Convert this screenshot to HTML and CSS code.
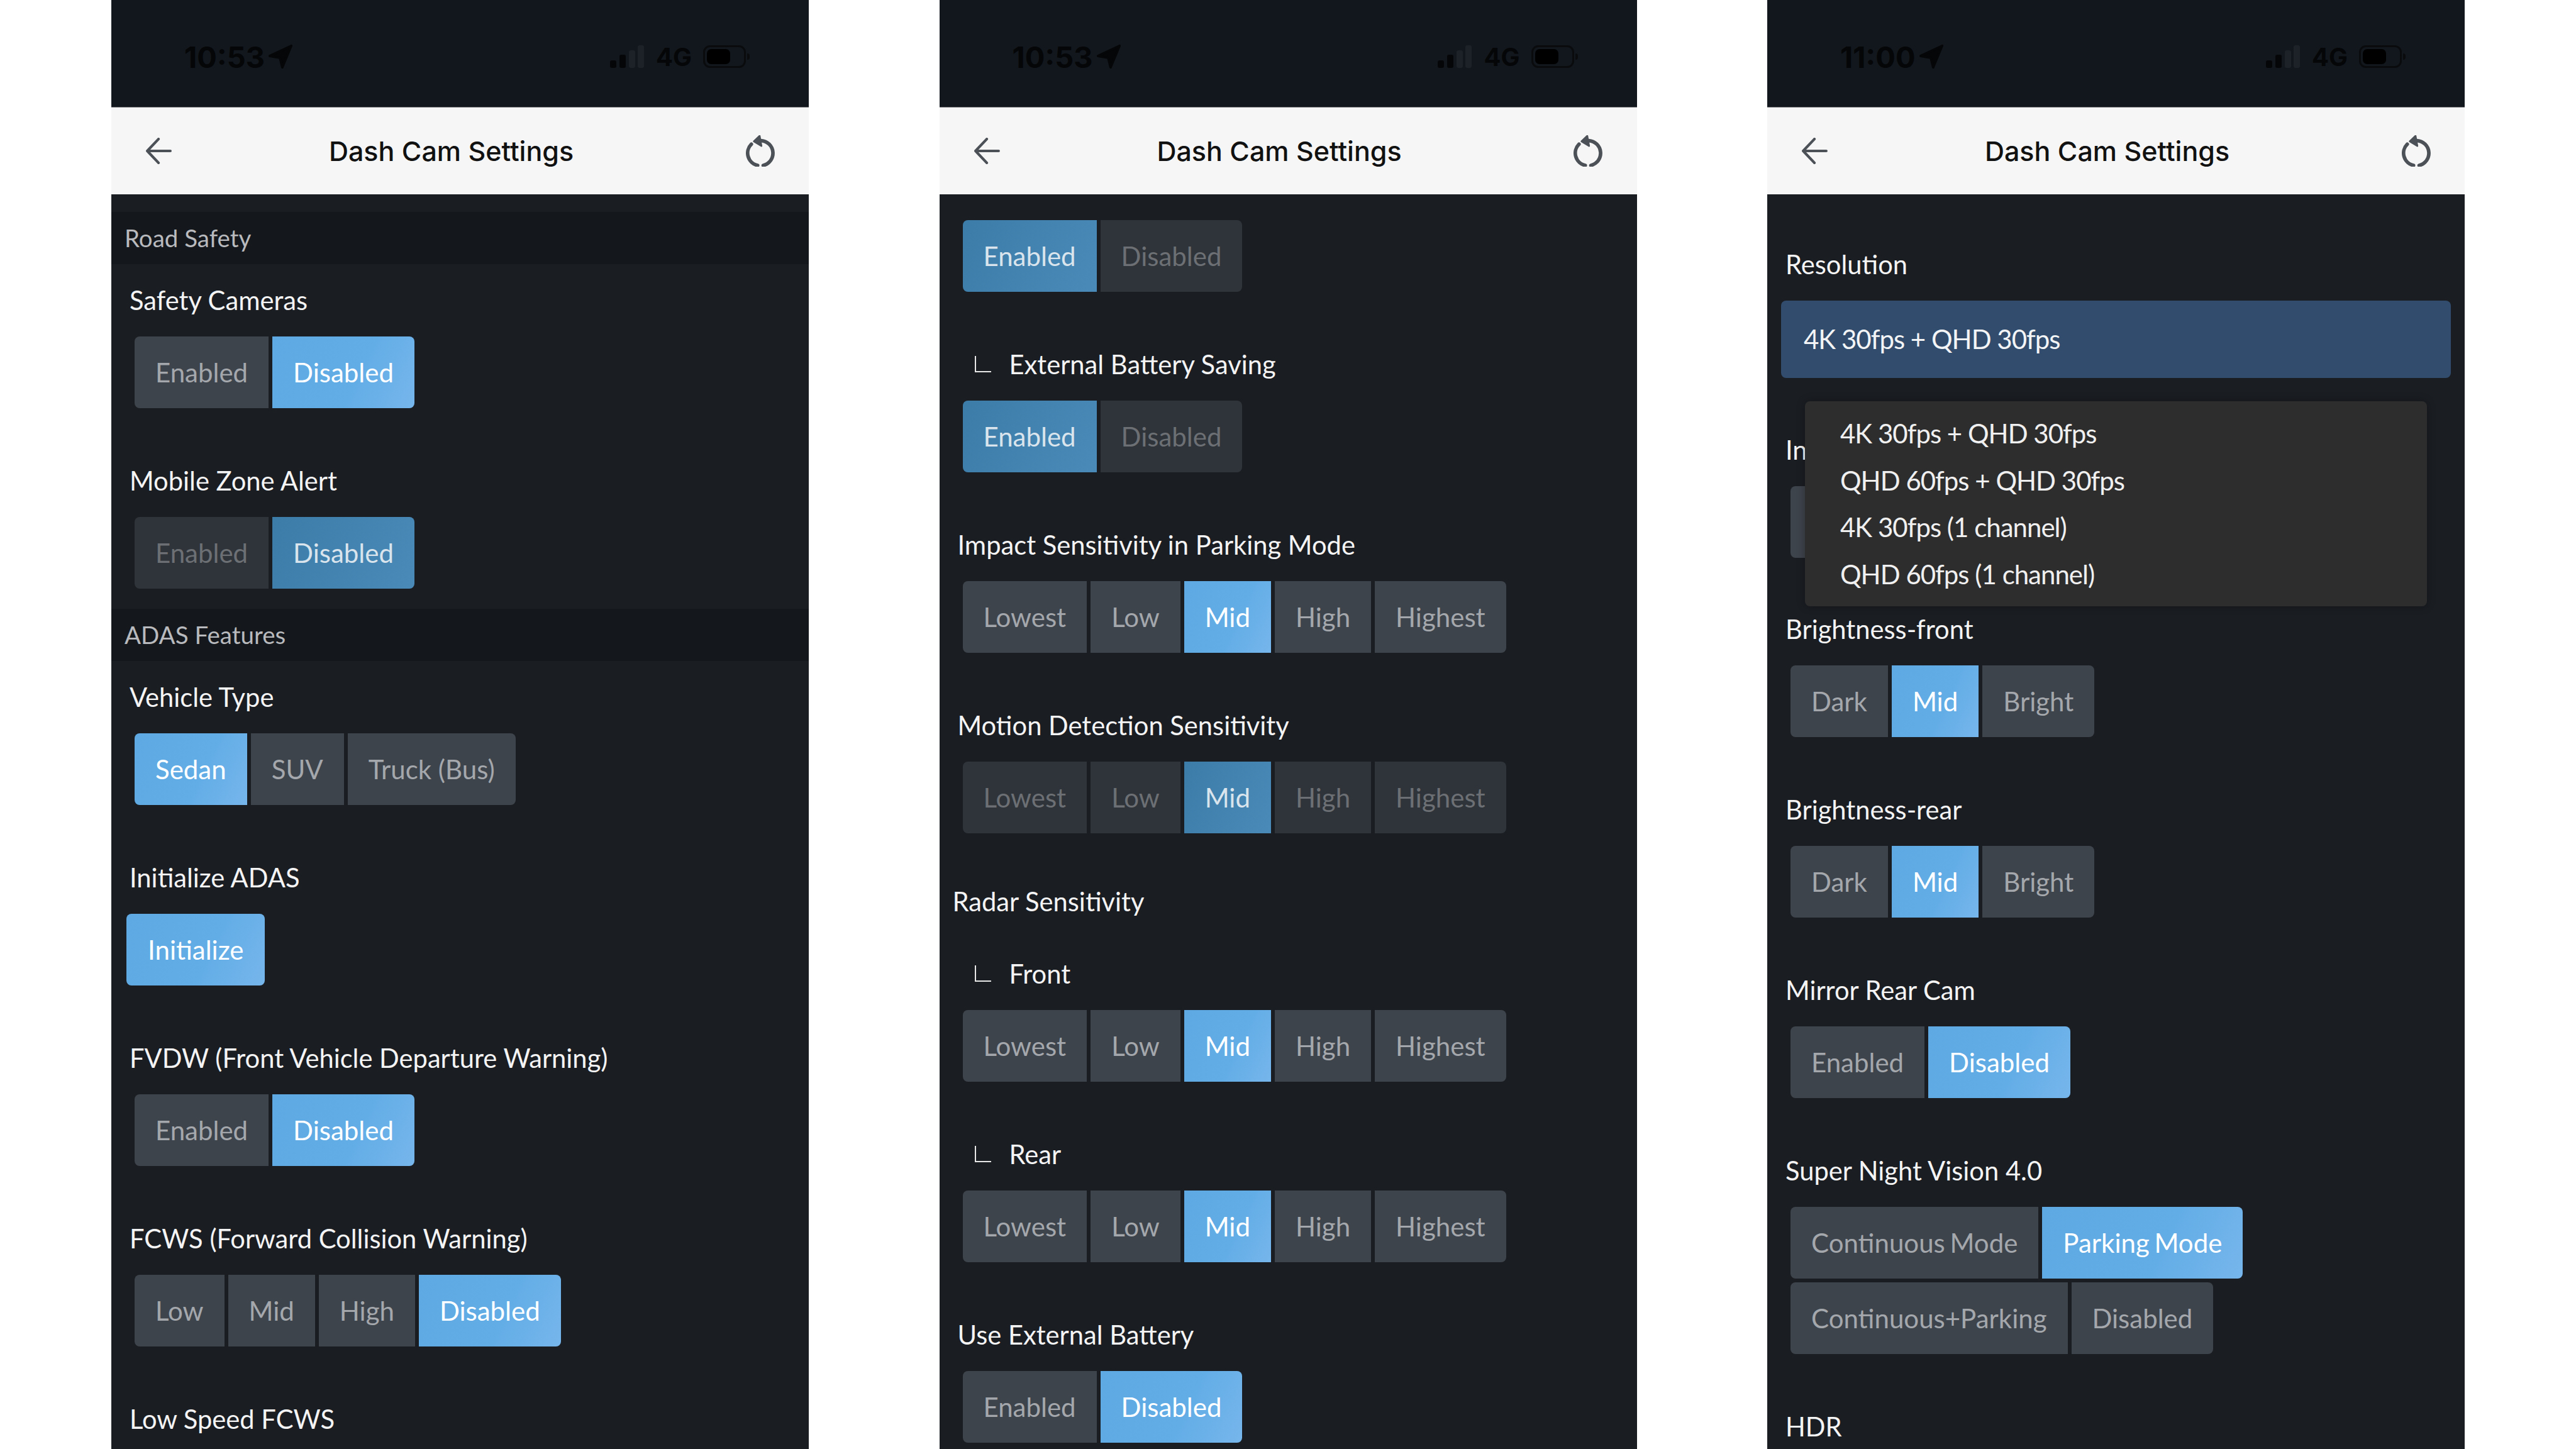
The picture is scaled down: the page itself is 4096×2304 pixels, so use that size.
FILE: index.html
```html
<!DOCTYPE html>
<html lang="en">
<head>
    <meta charset="UTF-8">
    <title>Dash Cam Settings</title>
    <link rel="stylesheet" href="styles.css">
</head>
<body>
    <!-- Road safety / ADAS screen -->
    <div class="phone">
        <div class="status">
            <div class="status-left">
                <span class="time">10:53</span>
                <svg class="loc" viewBox="0 0 42 42"><path d="M3 20 L39 3 L24 39 L20 23 Z" fill="#050607" stroke="#050607" stroke-width="4" stroke-linejoin="round"/></svg>
            </div>
            <div class="status-right">
                <svg class="signal" viewBox="0 0 54 36"><rect x="0" y="24" width="10" height="12" rx="3" fill="#050607"/><rect x="15" y="15" width="10" height="21" rx="3" fill="#050607"/><rect x="30" y="8" width="10" height="28" rx="3" fill="#1c2228"/><rect x="44" y="0" width="10" height="36" rx="3" fill="#1c2228"/></svg>
                <span class="net">4G</span>
                <div class="battery"><div class="battery-fill"></div></div>
            </div>
        </div>
        <div class="nav">
            <svg class="back" viewBox="0 0 40 40"><path d="M38 20 H3 M20 2 L3 20 L20 38" fill="none" stroke="#4c5158" stroke-width="4" stroke-linecap="round" stroke-linejoin="round"/></svg>
            <div class="title">Dash Cam Settings</div>
            <svg class="refresh" viewBox="0 0 160 175"><path d="M85 30 A70 70 0 0 1 96 168 M30 50 A70 70 0 0 0 65 168" fill="none" stroke="#4c5158" stroke-width="20" stroke-linecap="round"/><path d="M44 34 L76 4 L86 60 Z" fill="#4c5158" stroke="#4c5158" stroke-width="10" stroke-linejoin="round"/></svg>
        </div>
        <div class="content gap-top">
            <div class="band">Road Safety</div>
            <div class="section">
                <div class="item">
                    <div class="label">Safety Cameras</div>
                    <div class="btn-group">
                        <div class="btn">Enabled</div>
                        <div class="btn on">Disabled</div>
                    </div>
                </div>
                <div class="item">
                    <div class="label">Mobile Zone Alert</div>
                    <div class="btn-group">
                        <div class="btn dim">Enabled</div>
                        <div class="btn on dim">Disabled</div>
                    </div>
                </div>
            </div>
            <div class="band">ADAS Features</div>
            <div class="section">
                <div class="item">
                    <div class="label">Vehicle Type</div>
                    <div class="btn-group">
                        <div class="btn on">Sedan</div>
                        <div class="btn">SUV</div>
                        <div class="btn">Truck (Bus)</div>
                    </div>
                </div>
                <div class="item">
                    <div class="label">Initialize ADAS</div>
                    <div class="btn-group single">
                        <div class="btn on">Initialize</div>
                    </div>
                </div>
                <div class="item">
                    <div class="label">FVDW (Front Vehicle Departure Warning)</div>
                    <div class="btn-group">
                        <div class="btn">Enabled</div>
                        <div class="btn on">Disabled</div>
                    </div>
                </div>
                <div class="item">
                    <div class="label">FCWS (Forward Collision Warning)</div>
                    <div class="btn-group">
                        <div class="btn">Low</div>
                        <div class="btn">Mid</div>
                        <div class="btn">High</div>
                        <div class="btn on">Disabled</div>
                    </div>
                </div>
                <div class="item">
                    <div class="label">Low Speed FCWS</div>
                </div>
            </div>
        </div>
    </div>

    <!-- Sensitivity screen -->
    <div class="phone">
        <div class="status">
            <div class="status-left">
                <span class="time">10:53</span>
                <svg class="loc" viewBox="0 0 42 42"><path d="M3 20 L39 3 L24 39 L20 23 Z" fill="#050607" stroke="#050607" stroke-width="4" stroke-linejoin="round"/></svg>
            </div>
            <div class="status-right">
                <svg class="signal" viewBox="0 0 54 36"><rect x="0" y="24" width="10" height="12" rx="3" fill="#050607"/><rect x="15" y="15" width="10" height="21" rx="3" fill="#050607"/><rect x="30" y="8" width="10" height="28" rx="3" fill="#1c2228"/><rect x="44" y="0" width="10" height="36" rx="3" fill="#1c2228"/></svg>
                <span class="net">4G</span>
                <div class="battery"><div class="battery-fill"></div></div>
            </div>
        </div>
        <div class="nav">
            <svg class="back" viewBox="0 0 40 40"><path d="M38 20 H3 M20 2 L3 20 L20 38" fill="none" stroke="#4c5158" stroke-width="4" stroke-linecap="round" stroke-linejoin="round"/></svg>
            <div class="title">Dash Cam Settings</div>
            <svg class="refresh" viewBox="0 0 160 175"><path d="M85 30 A70 70 0 0 1 96 168 M30 50 A70 70 0 0 0 65 168" fill="none" stroke="#4c5158" stroke-width="20" stroke-linecap="round"/><path d="M44 34 L76 4 L86 60 Z" fill="#4c5158" stroke="#4c5158" stroke-width="10" stroke-linejoin="round"/></svg>
        </div>
        <div class="content start-buttons">
            <div class="item">
                <div class="btn-group">
                    <div class="btn on dim">Enabled</div>
                    <div class="btn dim">Disabled</div>
                </div>
            </div>
            <div class="item">
                <div class="label sub"><span class="corner"></span>External Battery Saving</div>
                <div class="btn-group">
                    <div class="btn on dim">Enabled</div>
                    <div class="btn dim">Disabled</div>
                </div>
            </div>
            <div class="item">
                <div class="label">Impact Sensitivity in Parking Mode</div>
                <div class="btn-group">
                    <div class="btn">Lowest</div>
                    <div class="btn">Low</div>
                    <div class="btn on">Mid</div>
                    <div class="btn">High</div>
                    <div class="btn">Highest</div>
                </div>
            </div>
            <div class="item tight">
                <div class="label">Motion Detection Sensitivity</div>
                <div class="btn-group">
                    <div class="btn dim">Lowest</div>
                    <div class="btn dim">Low</div>
                    <div class="btn on dim">Mid</div>
                    <div class="btn dim">High</div>
                    <div class="btn dim">Highest</div>
                </div>
            </div>
            <div class="label heading">Radar Sensitivity</div>
            <div class="item">
                <div class="label sub"><span class="corner"></span>Front</div>
                <div class="btn-group">
                    <div class="btn">Lowest</div>
                    <div class="btn">Low</div>
                    <div class="btn on">Mid</div>
                    <div class="btn">High</div>
                    <div class="btn">Highest</div>
                </div>
            </div>
            <div class="item">
                <div class="label sub"><span class="corner"></span>Rear</div>
                <div class="btn-group">
                    <div class="btn">Lowest</div>
                    <div class="btn">Low</div>
                    <div class="btn on">Mid</div>
                    <div class="btn">High</div>
                    <div class="btn">Highest</div>
                </div>
            </div>
            <div class="item">
                <div class="label">Use External Battery</div>
                <div class="btn-group">
                    <div class="btn">Enabled</div>
                    <div class="btn on">Disabled</div>
                </div>
            </div>
        </div>
    </div>

    <!-- Resolution screen with dropdown open -->
    <div class="phone">
        <div class="status">
            <div class="status-left">
                <span class="time">11:00</span>
                <svg class="loc" viewBox="0 0 42 42"><path d="M3 20 L39 3 L24 39 L20 23 Z" fill="#050607" stroke="#050607" stroke-width="4" stroke-linejoin="round"/></svg>
            </div>
            <div class="status-right">
                <svg class="signal" viewBox="0 0 54 36"><rect x="0" y="24" width="10" height="12" rx="3" fill="#050607"/><rect x="15" y="15" width="10" height="21" rx="3" fill="#050607"/><rect x="30" y="8" width="10" height="28" rx="3" fill="#1c2228"/><rect x="44" y="0" width="10" height="36" rx="3" fill="#1c2228"/></svg>
                <span class="net">4G</span>
                <div class="battery"><div class="battery-fill"></div></div>
            </div>
        </div>
        <div class="nav">
            <svg class="back" viewBox="0 0 40 40"><path d="M38 20 H3 M20 2 L3 20 L20 38" fill="none" stroke="#4c5158" stroke-width="4" stroke-linecap="round" stroke-linejoin="round"/></svg>
            <div class="title">Dash Cam Settings</div>
            <svg class="refresh" viewBox="0 0 160 175"><path d="M85 30 A70 70 0 0 1 96 168 M30 50 A70 70 0 0 0 65 168" fill="none" stroke="#4c5158" stroke-width="20" stroke-linecap="round"/><path d="M44 34 L76 4 L86 60 Z" fill="#4c5158" stroke="#4c5158" stroke-width="10" stroke-linejoin="round"/></svg>
        </div>
        <div class="content start-resolution">
            <div class="item select-item">
                <div class="label">Resolution</div>
                <div class="select">4K 30fps + QHD 30fps</div>
                <div class="menu">
                    <div class="menu-item">4K 30fps + QHD 30fps</div>
                    <div class="menu-item">QHD 60fps + QHD 30fps</div>
                    <div class="menu-item">4K 30fps (1 channel)</div>
                    <div class="menu-item">QHD 60fps (1 channel)</div>
                </div>
            </div>
            <div class="item under-menu">
                <div class="label">In</div>
                <div class="btn-group">
                    <div class="btn blank"></div>
                </div>
            </div>
            <div class="item">
                <div class="label">Brightness-front</div>
                <div class="btn-group">
                    <div class="btn">Dark</div>
                    <div class="btn on">Mid</div>
                    <div class="btn">Bright</div>
                </div>
            </div>
            <div class="item">
                <div class="label">Brightness-rear</div>
                <div class="btn-group">
                    <div class="btn">Dark</div>
                    <div class="btn on">Mid</div>
                    <div class="btn">Bright</div>
                </div>
            </div>
            <div class="item">
                <div class="label">Mirror Rear Cam</div>
                <div class="btn-group">
                    <div class="btn">Enabled</div>
                    <div class="btn on">Disabled</div>
                </div>
            </div>
            <div class="item">
                <div class="label">Super Night Vision 4.0</div>
                <div class="btn-group night">
                    <div class="btn">Continuous Mode</div>
                    <div class="btn on">Parking Mode</div>
                </div>
                <div class="btn-group second-row">
                    <div class="btn">Continuous+Parking</div>
                    <div class="btn">Disabled</div>
                </div>
            </div>
            <div class="item">
                <div class="label">HDR</div>
            </div>
        </div>
    </div>
</body>
</html>
```

FILE: styles.css
```css
html, body {
    margin: 0;
    padding: 0;
}

body {
    width: 4096px;
    height: 2304px;
    overflow: hidden;
    background-color: #fff;
    display: flex;
    justify-content: center;
    gap: 207.5px;
    font-family: Lato, sans-serif;
}

.phone {
    width: 1109px;
    height: 2304px;
    overflow: hidden;
    background-color: #1a1d22;
}

/* status bar */
.status {
    height: 171px;
    box-sizing: border-box;
    padding: 72px 100px 0 116px;
    display: flex;
    justify-content: space-between;
    align-items: flex-start;
    background-color: #12171d;
    border-bottom: 1px solid #77797c;
}

.status-left,
.status-right {
    display: flex;
    align-items: center;
    height: 36px;
}

.time {
    font-family: Inter, sans-serif;
    font-weight: 700;
    font-size: 47px;
    color: #050607;
}

.loc {
    width: 40px;
    height: 40px;
    margin-left: 5px;
}

.signal {
    width: 54px;
    height: 36px;
}

.net {
    font-family: Inter, sans-serif;
    font-weight: 700;
    font-size: 40px;
    color: #050607;
    margin-left: 19px;
}

.battery {
    width: 68px;
    height: 36px;
    box-sizing: border-box;
    margin-left: 18px;
    border: 3px solid #090b0d;
    border-radius: 11px;
    padding: 3px;
    position: relative;
}

.battery::after {
    content: "";
    position: absolute;
    right: -9px;
    top: 10px;
    width: 4px;
    height: 10px;
    border-radius: 0 4px 4px 0;
    background-color: #090b0d;
}

.battery-fill {
    width: 37px;
    height: 100%;
    background-color: #000;
    border-radius: 7px;
}

/* nav bar */
.nav {
    height: 138px;
    box-sizing: border-box;
    padding: 0 54px 0 54px;
    display: flex;
    align-items: center;
    justify-content: space-between;
    background-color: #f6f6f6;
}

.back {
    width: 42px;
    height: 42px;
}

.title {
    font-family: Inter, sans-serif;
    font-weight: 500;
    font-size: 43px;
    color: #111;
    margin-right: 24px;
}

.refresh {
    width: 46px;
    height: 50px;
}

/* scrolling area */
.gap-top {
    padding-top: 28px;
}

.start-buttons {
    padding-top: 41px;
}

.start-resolution {
    padding-top: 81px;
}

.band {
    height: 83px;
    line-height: 83px;
    padding-left: 21px;
    font-size: 38.5px;
    color: #b8babd;
    background-color: #14181c;
}

.section {
    padding-top: 27px;
}

.section:nth-of-type(2) .item:last-child {
    margin-bottom: 32px;
}

.item {
    margin-bottom: 85px;
    position: relative;
}

.item.tight {
    margin-bottom: 78px;
}

.label {
    height: 60px;
    line-height: 60px;
    margin-bottom: 28px;
    padding-left: 29px;
    font-size: 41.7px;
    color: #f4f4f4;
    white-space: nowrap;
}

.label.heading {
    padding-left: 21px;
    margin-bottom: 55px;
}

.label.sub {
    display: flex;
    align-items: center;
}

.corner {
    width: 26px;
    height: 26px;
    box-sizing: border-box;
    margin: 0 29px 0 27px;
    border-left: 2px solid #e8e8e8;
    border-bottom: 2px solid #e8e8e8;
}

/* button groups */
.btn-group {
    display: flex;
    gap: 6px;
    margin-left: 37px;
}

.btn-group.single {
    margin-left: 24px;
}

.btn-group.single .btn {
    padding: 0 34px;
}

.btn-group.night .btn {
    word-spacing: -3px;
}

.btn-group.second-row {
    margin-top: 6px;
}

.btn {
    height: 114px;
    line-height: 114px;
    padding: 0 33px;
    font-size: 42px;
    color: #a4a8ac;
    background-color: #3e444c;
}

.btn:first-child {
    border-radius: 8px 0 0 8px;
}

.btn:last-child {
    border-radius: 0 8px 8px 0;
}

.btn:only-child {
    border-radius: 8px;
}

.btn.blank {
    width: 60px;
}

.btn.on {
    color: #fff;
    background: linear-gradient(115deg, #5ea9e3, #63ade6 60%, #76b6ec);
}

.btn.dim {
    color: #6c7074;
    background-color: #2f343a;
}

.btn.on.dim {
    color: #d9e4ec;
    background: linear-gradient(115deg, #3c7ca9, #4a8ab8);
}

/* resolution dropdown */
.select {
    height: 123px;
    line-height: 123px;
    box-sizing: border-box;
    margin: 0 22px;
    padding-left: 36px;
    font-size: 42px;
    letter-spacing: -1px;
    color: #f2f4f6;
    background-color: #314c6c;
    border-radius: 8px;
}

.select-item {
    margin-bottom: 84px;
}

.under-menu {
    margin-bottom: 83px;
}

.menu {
    position: absolute;
    left: 60px;
    top: 248px;
    z-index: 2;
    width: 989px;
    box-sizing: border-box;
    padding: 14px 0;
    background-color: #2d2d2d;
    border-radius: 8px;
    box-shadow: 0 0 14px rgba(0, 0, 0, 0.3);
}

.menu-item {
    height: 74.6px;
    line-height: 74.6px;
    padding-left: 56px;
    font-size: 42px;
    letter-spacing: -1px;
    color: #f0f0f0;
}
```
